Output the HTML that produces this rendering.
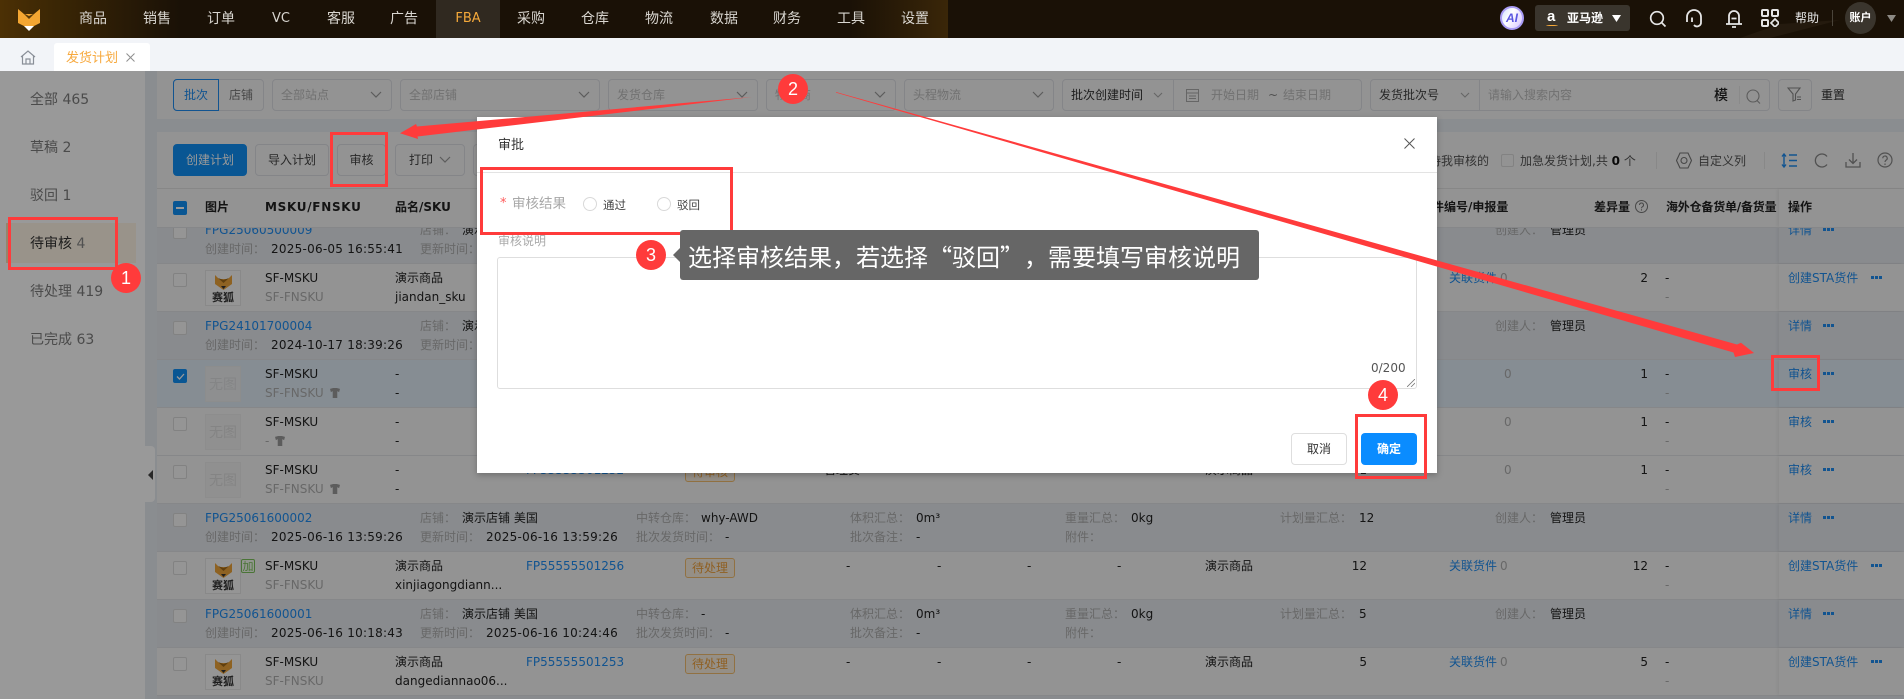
<!DOCTYPE html>
<html lang="zh"><head><meta charset="utf-8"><title>发货计划</title>
<style>
html,body{margin:0;padding:0;width:1904px;height:699px;overflow:hidden;background:#f2f4f8;font-family:"DejaVu Sans","Noto Sans CJK SC",sans-serif;font-size:12px;color:#222}
div,span,svg{box-sizing:border-box}
.abs,.t,svg.i{position:absolute}
.t{white-space:nowrap;line-height:18px}
.cn{font-family:"Noto Sans CJK SC",sans-serif}
.top{position:absolute;left:0;top:0;width:1904px;height:38px;background:#1a1106;overflow:hidden}
.n{position:absolute;top:8px;width:64px;text-align:center;color:#d9d6d0;font-size:14px;line-height:20px;font-family:"Noto Sans CJK SC",sans-serif}
.side{position:absolute;left:0;top:71px;width:145px;height:628px;background:#fff}
.si{position:absolute;left:30px;font-size:14px;line-height:20px;color:#7d7d7d;white-space:nowrap}
.s{position:absolute;top:79px;height:32px;border:1px solid #dcdee3;border-radius:4px}
.ph{color:#bdbdbd;position:absolute;top:87px;line-height:16px;white-space:nowrap}
.btn{position:absolute;top:144px;height:32px;border:1px solid #dcdee3;border-radius:4px;text-align:center;line-height:30px;color:#444}
.h{position:absolute;top:198px;line-height:18px;font-weight:700;color:#222;white-space:nowrap;font-size:12px}
.r{position:absolute;left:157px;width:1747px;height:48px;border-bottom:1px solid #dfe1e5}
.bt{background:#e4e8ed}.sk{background:#f6f6f6}.se{background:#dfebf5}
.in{position:absolute;left:-157px;top:-227px;width:1904px;height:699px}
.cb{position:absolute;left:16px;top:9px;width:14px;height:14px;border:1px solid #d9d9d9;border-radius:2px;background:#f8f8f8}
.op{position:absolute;left:1622px;top:0;width:125px;height:47px;background:inherit;box-shadow:-2px 0 3px rgba(0,0,0,.05)}
.x{position:absolute;white-space:nowrap;line-height:18px}
.a{top:5px}.c{top:24px}
.g{color:#adadad}.k{color:#1f8cf0}
.d{letter-spacing:.24px}
.img{position:absolute;left:48px;top:6px;width:36px;height:36px;border:1px solid #e4e4e4;background:#f8f8f8;text-align:center}
.nop{position:absolute;left:48px;top:6px;width:36px;height:36px;background:#f0f0f0;border:1px solid #ebebeb;text-align:center;line-height:34px;font-size:14px;color:#dcdcdc;font-family:"Noto Sans CJK SC",sans-serif}
.fox{position:absolute;left:9px;top:4px}
.hu{position:absolute;left:0;right:0;top:20px;font-size:11px;line-height:13px;font-weight:700;color:#333;font-family:"Noto Sans CJK SC",sans-serif}
.tag{position:absolute;left:528px;top:6px;width:50px;height:20px;border:1px solid #f2bd6e;border-radius:3px;background:#f8efdf;color:#efa03c;text-align:center;line-height:18px}
.dots{position:absolute;top:12px;width:11px;height:3px;background:repeating-linear-gradient(90deg,#1f8cf0 0,#1f8cf0 3px,transparent 3px,transparent 4px)}
.shade{position:absolute;left:0;top:71px;width:1904px;height:628px;background:rgba(0,0,0,.4)}
.modal{position:absolute;left:477px;top:117px;width:960px;height:356px;background:#fff;box-shadow:0 2px 6px rgba(0,0,0,.25)}
.mt{position:absolute;white-space:nowrap;line-height:18px}
.radio{position:absolute;width:14px;height:14px;border:1px solid #d9d9d9;border-radius:50%;background:#fff}
.rb{position:absolute;border:3px solid #ff3b3b}
.no{position:absolute;width:30px;height:30px;border-radius:50%;background:#ff3b3b;color:#fff;text-align:center;font-size:18px;line-height:30px;font-family:"Liberation Sans",sans-serif}
</style></head><body>

<!-- top bar -->
<div class="top">
<div class="abs" style="left:0;top:0;width:200px;height:38px;background:linear-gradient(90deg,#4c3005 0,#3c2705 25%,#1a1106 90%)"></div>
<div class="abs" style="left:850px;top:0;width:98px;height:38px;background:linear-gradient(90deg,rgba(60,38,8,0),#3a2608)"></div>
<svg class="i" style="left:1740px;top:20px" width="110" height="18"><path d="M0 18L40 4L100 0L30 18Z" fill="#241a0e"/></svg>
<svg class="i" style="left:17px;top:8px" width="24" height="24" viewBox="0 0 24 24"><path d="M1 1L7 6H17L23 1V15L15 19H9L1 15Z" fill="#f4a632"/><path d="M6 5L12 11L18 5L12 8Z" fill="#5a3b0a"/><path d="M7 18H17L12 23Z" fill="#fff"/></svg>
<div class="abs" style="left:436px;top:0;width:64px;height:38px;background:#302920"></div>
<div class="n" style="left:61px">商品</div><div class="n" style="left:125px">销售</div><div class="n" style="left:189px">订单</div><div class="n" style="left:249px;top:9px;font-family:'DejaVu Sans',sans-serif;font-size:13px">VC</div><div class="n" style="left:309px">客服</div><div class="n" style="left:372px">广告</div><div class="n" style="left:436px;top:9px;color:#f5a93a;font-family:'DejaVu Sans',sans-serif;font-size:13px">FBA</div><div class="n" style="left:499px">采购</div><div class="n" style="left:563px">仓库</div><div class="n" style="left:627px">物流</div><div class="n" style="left:692px">数据</div><div class="n" style="left:755px">财务</div><div class="n" style="left:819px">工具</div><div class="n" style="left:883px">设置</div>
<div class="abs" style="left:1500px;top:6px;width:24px;height:24px;border-radius:50%;background:linear-gradient(120deg,#cfe0ff,#fff 40%,#d7c6ff);border:2px solid #a99cf5;color:#5a56e0;font:italic 700 12px/20px 'Liberation Sans',sans-serif;text-align:center">AI</div>
<div class="abs" style="left:1535px;top:5px;width:95px;height:26px;background:#3a352d;border-radius:3px"></div>
<div class="t" style="left:1547px;top:8px;color:#fff;font:700 15px/18px 'Liberation Sans',sans-serif">a</div>
<div class="abs" style="left:1546px;top:24px;width:12px;height:2px;border-bottom:1.5px solid #f5a93a;border-radius:50%"></div>
<div class="t" style="left:1567px;top:9px;color:#fff;font-weight:700">亚马逊</div>
<svg class="i" style="left:1612px;top:15px" width="9" height="7"><path d="M0 0H9L4.500 7Z" fill="#fff"/></svg>
<svg class="i" style="left:1649px;top:10px" width="18" height="18" viewBox="0 0 18 18" fill="none" stroke="#e6e6e6" stroke-width="1.7"><circle cx="8" cy="8" r="6.300"/><path d="M12.500 12.500L16.500 16.500"/></svg>
<svg class="i" style="left:1685px;top:9px" width="18" height="20" viewBox="0 0 18 20" fill="none" stroke="#e6e6e6" stroke-width="1.800"><path d="M2 13V8a7 7 0 0 1 14 0v5M7 8.500V13M16 8v5a4 4 0 0 1-7 3"/></svg>
<svg class="i" style="left:1725px;top:9px" width="18" height="20" viewBox="0 0 18 20" fill="none" stroke="#e6e6e6" stroke-width="1.800"><path d="M1 15H17M4 15V7a5 5 0 0 1 10 0v8M6.500 9.500H11.500M7 18h4"/></svg>
<svg class="i" style="left:1761px;top:9px" width="18" height="18" viewBox="0 0 18 18" fill="none" stroke="#e6e6e6" stroke-width="2"><rect x="1" y="1" width="6" height="6" rx="1"/><rect x="11" y="1" width="6" height="6" rx="1"/><rect x="1" y="11" width="6" height="6" rx="1"/><path d="M14 10l4 4-4 4-4-4z" stroke-width="1.700"/></svg>
<div class="t" style="left:1795px;top:9px;color:#e6e6e6">帮助</div>
<div class="abs" style="left:1832px;top:10px;width:1px;height:16px;background:#4a443a"></div>
<div class="abs" style="left:1845px;top:2px;width:31px;height:32px;border-radius:50%;background:#3a352d;color:#fff;text-align:center;line-height:32px;font-weight:700;font-size:11px">账户</div>
<svg class="i" style="left:1887px;top:15px" width="9" height="7"><path d="M0 0H9L4.500 7Z" fill="#8d8a84"/></svg>
</div>

<!-- tabs -->
<svg class="i" style="left:20px;top:50px" width="16" height="15" viewBox="0 0 16 15" fill="none" stroke="#8a8f98" stroke-width="1.200"><path d="M1 7L8 1L15 7M2.500 6V14H13.500V6M6 14V9H10V14"/></svg>
<div class="abs" style="left:54px;top:43px;width:96px;height:28px;background:#fff;border-radius:3px 3px 0 0"></div>
<div class="t cn" style="left:66px;top:48px;color:#f7a93e;font-size:13px">发货计划</div>
<svg class="i" style="left:126px;top:53px" width="9" height="9" viewBox="0 0 9 9" stroke="#8f8f8f" stroke-width="1"><path d="M.5.500L8.500 8.500M8.500.500L.5 8.500"/></svg>

<!-- page bg -->
<div class="abs" style="left:145px;top:71px;width:1759px;height:628px;background:#e7ebf0"></div>

<!-- sidebar -->
<div class="side"></div>
<div class="abs" style="left:145px;top:446px;width:10px;height:56px;background:#fff;border-radius:0 4px 4px 0"></div>
<svg class="i" style="left:148px;top:470px" width="5" height="10"><path d="M5 0V10L0 5Z" fill="#444"/></svg>
<div class="abs" style="left:6px;top:223px;width:130px;height:40px;background:#fff6e6;border-left:2px solid #f6dfb5"></div>
<div class="si" style="top:90px">全部 465</div>
<div class="si" style="top:138px">草稿 2</div>
<div class="si" style="top:186px">驳回 1</div>
<div class="si" style="top:234px;color:#333">待审核 <span style="color:#888">4</span></div>
<div class="si" style="top:282px">待处理 419</div>
<div class="si" style="top:330px">已完成 63</div>

<!-- filter panel -->
<div class="abs" style="left:157px;top:71px;width:1747px;height:48px;background:#f5f5f5"></div>
<div class="s" style="left:173px;width:91px"></div>
<div class="abs" style="left:173px;top:79px;width:46px;height:32px;border:1px solid #1f8cf0;border-radius:4px 0 0 4px"></div>
<div class="t" style="left:184px;top:86px;color:#1f8cf0">批次</div><div class="t" style="left:229px;top:86px;color:#777">店铺</div>
<div class="s" style="left:272px;width:120px"></div><div class="ph" style="left:281px">全部站点</div>
<svg class="i" style="left:370px;top:91px" width="12" height="8" viewBox="0 0 12 8" fill="none" stroke="#999" stroke-width="1.200"><path d="M1 1l5 5 5-5"/></svg>
<div class="s" style="left:400px;width:200px"></div><div class="ph" style="left:409px">全部店铺</div>
<svg class="i" style="left:578px;top:91px" width="12" height="8" viewBox="0 0 12 8" fill="none" stroke="#999" stroke-width="1.200"><path d="M1 1l5 5 5-5"/></svg>
<div class="s" style="left:608px;width:150px"></div><div class="ph" style="left:617px">发货仓库</div>
<svg class="i" style="left:736px;top:91px" width="12" height="8" viewBox="0 0 12 8" fill="none" stroke="#999" stroke-width="1.200"><path d="M1 1l5 5 5-5"/></svg>
<div class="s" style="left:766px;width:130px"></div><div class="ph" style="left:775px">物流商</div>
<svg class="i" style="left:874px;top:91px" width="12" height="8" viewBox="0 0 12 8" fill="none" stroke="#999" stroke-width="1.200"><path d="M1 1l5 5 5-5"/></svg>
<div class="s" style="left:904px;width:150px"></div><div class="ph" style="left:913px">头程物流</div>
<svg class="i" style="left:1032px;top:91px" width="12" height="8" viewBox="0 0 12 8" fill="none" stroke="#999" stroke-width="1.200"><path d="M1 1l5 5 5-5"/></svg>
<div class="s" style="left:1062px;width:300px"></div>
<div class="abs" style="left:1173px;top:79px;width:1px;height:32px;background:#dcdee3"></div>
<div class="ph" style="left:1071px;color:#333">批次创建时间</div>
<svg class="i" style="left:1153px;top:92px" width="10" height="7" viewBox="0 0 10 7" fill="none" stroke="#aaa" stroke-width="1.100"><path d="M1 1l4 4 4-4"/></svg>
<svg class="i" style="left:1186px;top:88px" width="13" height="14" viewBox="0 0 13 14" fill="none" stroke="#aaa"><rect x=".5" y="1.500" width="12" height="12"/><path d="M.5 5H12.500M3 8H10M3 10.500H10"/></svg>
<div class="ph" style="left:1211px">开始日期</div><div class="ph" style="left:1268px;color:#888">~</div><div class="ph" style="left:1283px">结束日期</div>
<div class="s" style="left:1370px;width:400px"></div>
<div class="abs" style="left:1479px;top:79px;width:1px;height:32px;background:#dcdee3"></div>
<div class="ph" style="left:1379px;color:#444">发货批次号</div>
<svg class="i" style="left:1460px;top:92px" width="10" height="7" viewBox="0 0 10 7" fill="none" stroke="#aaa" stroke-width="1.100"><path d="M1 1l4 4 4-4"/></svg>
<div class="ph" style="left:1488px">请输入搜索内容</div>
<div class="t cn" style="left:1714px;top:86px;font-size:14px;font-weight:500;color:#222">模</div>
<div class="abs" style="left:1739px;top:86px;width:1px;height:18px;background:#e6e6e6"></div>
<svg class="i" style="left:1746px;top:89px" width="15" height="15" viewBox="0 0 15 15" fill="none" stroke="#999" stroke-width="1.100"><circle cx="7" cy="7" r="6"/><path d="M11 11.500L14 14.500"/></svg>
<div class="s" style="left:1778px;width:34px"></div>
<svg class="i" style="left:1787px;top:87px" width="15" height="15" viewBox="0 0 15 15" fill="none" stroke="#888" stroke-width="1.100"><path d="M1 1H13L8.500 7V13L6 14V7Z"/><path d="M10 10H14M10 12.500H14"/></svg>
<div class="t" style="left:1821px;top:86px;color:#333">重置</div>

<!-- toolbar -->
<div class="abs" style="left:157px;top:132px;width:1747px;height:56px;background:#f5f5f5"></div>
<div class="btn" style="left:173px;width:74px;background:#1090f5;border-color:#1090f5;color:#fff">创建计划</div>
<div class="btn" style="left:255px;width:74px">导入计划</div>
<div class="btn" style="left:337px;width:49px">审核</div>
<div class="btn" style="left:395px;width:70px;text-align:left;padding-left:13px">打印</div>
<svg class="i" style="left:439px;top:156px" width="12" height="8" viewBox="0 0 12 8" fill="none" stroke="#999" stroke-width="1.200"><path d="M1 1l5 5 5-5"/></svg>
<div class="btn" style="left:473px;width:60px"></div>
<div class="t" style="left:1429px;top:152px;color:#555">待我审核的</div>
<div class="abs" style="left:1501px;top:154px;width:13px;height:13px;border:1px solid #d9d9d9;border-radius:2px"></div>
<div class="t" style="left:1520px;top:152px;color:#555">加急发货计划,共 <b style="color:#111">0</b> 个</div>
<div class="abs" style="left:1656px;top:152px;width:1px;height:17px;background:#e3e3e3"></div>
<svg class="i" style="left:1676px;top:152px" width="16" height="17" viewBox="0 0 16 17" fill="none" stroke="#777" stroke-width="1.100"><path d="M4 1H12L15.500 8.500L12 16H4L.5 8.500Z"/><circle cx="8" cy="8.500" r="3"/></svg>
<div class="t" style="left:1698px;top:152px;color:#555">自定义列</div>
<div class="abs" style="left:1764px;top:152px;width:1px;height:17px;background:#e3e3e3"></div>
<svg class="i" style="left:1781px;top:153px" width="16" height="15" viewBox="0 0 16 15" fill="none" stroke="#1f8cf0" stroke-width="1.400"><path d="M3 1V14M1 3.500L3 1L5 3.500M1 11.500L3 14L5 11.500M8 2H16M8 7.500H16M8 13H16"/></svg>
<svg class="i" style="left:1814px;top:153px" width="15" height="15" viewBox="0 0 15 15" fill="none" stroke="#888" stroke-width="1.300"><path d="M13 3.500A6.500 6.500 0 1 0 13 11.500"/></svg>
<svg class="i" style="left:1845px;top:152px" width="16" height="16" viewBox="0 0 16 16" fill="none" stroke="#888" stroke-width="1.300"><path d="M8 1V11M4 7.500L8 11.500L12 7.500M1 10V15H15V10"/></svg>
<svg class="i" style="left:1877px;top:152px" width="16" height="16" viewBox="0 0 16 16" fill="none" stroke="#888" stroke-width="1.200"><circle cx="8" cy="8" r="7"/><path d="M5.800 6.200a2.200 2.200 0 1 1 3.300 1.900C8.300 8.600 8 9 8 10M8 11.500V13"/></svg>

<!-- header -->
<div class="abs" style="left:157px;top:188px;width:1747px;height:39px;background:#f5f5f5;border-top:1px solid #e2e2e2"></div>
<div class="abs" style="left:173px;top:201px;width:14px;height:14px;background:#1090f5;border-radius:2px"></div>
<div class="abs" style="left:176px;top:207px;width:8px;height:2px;background:#fff"></div>
<div class="h" style="left:205px">图片</div>
<div class="h" style="left:265px;letter-spacing:.7px">MSKU/FNSKU</div>
<div class="h" style="left:395px">品名/SKU</div>
<div class="h" style="left:1432px">件编号/申报量</div>
<div class="h" style="left:1594px">差异量</div>
<svg class="i" style="left:1635px;top:200px" width="13" height="13" viewBox="0 0 13 13" fill="none" stroke="#777"><circle cx="6.500" cy="6.500" r="6"/><path d="M4.500 5a2 2 0 1 1 3 1.700C6.800 7.100 6.500 7.500 6.500 8.200M6.500 9.300V10.500"/></svg>
<div class="h" style="left:1666px;letter-spacing:-.2px">海外仓备货单/备货量</div>
<div class="abs" style="left:1779px;top:189px;width:125px;height:38px;background:#f5f5f5;box-shadow:-2px 0 3px rgba(0,0,0,.05)"></div>
<div class="h" style="left:1788px">操作</div>

<!-- rows -->
<div class="abs" style="left:157px;top:227px;width:1747px;height:472px;overflow:hidden;background:#e4e8ed;border-top:1px solid #dfe1e5"><div class="in">
<div class="r bt" style="top:215px"><div class="op"></div><div class="cb"></div>
<span class="x a k" style="left:48px">FPG25060500009</span><span class="x c g" style="left:48px">创建时间：</span><span class="x c d" style="left:114px">2025-06-05 16:55:41</span><span class="x a g" style="left:263px">店铺：</span><span class="x a" style="left:305px">演示店铺 美国</span><span class="x c g" style="left:263px">更新时间：</span><span class="x a g" style="left:1338px">创建人：</span><span class="x a" style="left:1393px">管理员</span><span class="x a k" style="left:1631px">详情</span><span class="dots" style="left:1666px"></span></div>

<div class="r sk" style="top:263px"><div class="op"></div><div class="cb"></div><div class="img"><svg class="fox" width="17" height="15" viewBox="0 0 17 15"><path d="M0 0L4 4H13L17 0V9L8.500 15L0 9Z" fill="#eda33a"/><path d="M3 3L8.500 8L14 3L8.500 5Z" fill="#a06a18"/><path d="M6 11H11L8.500 14Z" fill="#333"/></svg><div class="hu">赛狐</div></div>
<span class="x a" style="left:108px">SF-MSKU</span><span class="x c g" style="left:108px">SF-FNSKU</span><span class="x a" style="left:238px">演示商品</span><span class="x c" style="left:238px">jiandan_sku</span>
<span class="x a k" style="left:1292px">关联货件</span><span class="x a g" style="left:1343px">0</span><span class="x a" style="left:1481px;width:10px;text-align:right">2</span><span class="x a" style="left:1508px">-</span><span class="x c g" style="left:1508px">-</span><span class="x a k" style="left:1631px">创建STA货件</span><span class="dots" style="left:1714px"></span></div>

<div class="r bt" style="top:311px"><div class="op"></div><div class="cb"></div>
<span class="x a k" style="left:48px">FPG24101700004</span><span class="x c g" style="left:48px">创建时间：</span><span class="x c d" style="left:114px">2024-10-17 18:39:26</span><span class="x a g" style="left:263px">店铺：</span><span class="x a" style="left:305px">演示店铺 美国</span><span class="x c g" style="left:263px">更新时间：</span><span class="x a g" style="left:1338px">创建人：</span><span class="x a" style="left:1393px">管理员</span><span class="x a k" style="left:1631px">详情</span><span class="dots" style="left:1666px"></span></div>

<div class="r se" style="top:359px"><div class="op"></div><div class="cb" style="background:#1090f5;border-color:#1090f5"><svg class="abs" style="left:2px;top:3px" width="9" height="7" viewBox="0 0 9 7" fill="none" stroke="#fff" stroke-width="1.300"><path d="M1 3.500L3.500 6L8 1"/></svg></div><div class="nop" style="opacity:.85">无图</div>
<span class="x a" style="left:108px">SF-MSKU</span><span class="x c g" style="left:108px">SF-FNSKU</span><svg class="abs" style="left:173px;top:28px" width="10" height="10" viewBox="0 0 11 11"><path d="M0 1L3.500 0H7.500L11 1L10 4.500L8 3.500V11H3V3.500L1 4.500Z" fill="#999"/></svg><span class="x a" style="left:238px">-</span><span class="x c" style="left:238px">-</span>
<span class="x a g" style="left:1347px">0</span><span class="x a" style="left:1481px;width:10px;text-align:right">1</span><span class="x a" style="left:1508px">-</span><span class="x c g" style="left:1508px">-</span><span class="x a k" style="left:1631px">审核</span><span class="dots" style="left:1666px"></span></div>

<div class="r sk" style="top:407px"><div class="op"></div><div class="cb"></div><div class="nop">无图</div>
<span class="x a" style="left:108px">SF-MSKU</span><span class="x c g" style="left:108px">-</span><svg class="abs" style="left:118px;top:28px" width="10" height="10" viewBox="0 0 11 11"><path d="M0 1L3.500 0H7.500L11 1L10 4.500L8 3.500V11H3V3.500L1 4.500Z" fill="#999"/></svg><span class="x a" style="left:238px">-</span><span class="x c" style="left:238px">-</span>
<span class="x a g" style="left:1347px">0</span><span class="x a" style="left:1481px;width:10px;text-align:right">1</span><span class="x a" style="left:1508px">-</span><span class="x c g" style="left:1508px">-</span><span class="x a k" style="left:1631px">审核</span><span class="dots" style="left:1666px"></span></div>

<div class="r sk" style="top:455px"><div class="op"></div><div class="cb"></div><div class="nop">无图</div>
<span class="x a" style="left:108px">SF-MSKU</span><span class="x c g" style="left:108px">SF-FNSKU</span><svg class="abs" style="left:173px;top:28px" width="10" height="10" viewBox="0 0 11 11"><path d="M0 1L3.500 0H7.500L11 1L10 4.500L8 3.500V11H3V3.500L1 4.500Z" fill="#999"/></svg><span class="x a" style="left:238px">-</span><span class="x c" style="left:238px">-</span><span class="x a k" style="left:369px">FP55555501252</span><div class="tag">待审核</div><span class="x a" style="left:667px">管理员</span><span class="x a" style="left:1048px">演示商品</span>
<span class="x a" style="left:1200px;width:10px;text-align:right">1</span><span class="x a g" style="left:1347px">0</span><span class="x a" style="left:1481px;width:10px;text-align:right">1</span><span class="x a" style="left:1508px">-</span><span class="x c g" style="left:1508px">-</span><span class="x a k" style="left:1631px">审核</span><span class="dots" style="left:1666px"></span></div>

<div class="r bt" style="top:503px"><div class="op"></div><div class="cb"></div>
<span class="x a k" style="left:48px">FPG25061600002</span><span class="x c g" style="left:48px">创建时间：</span><span class="x c d" style="left:114px">2025-06-16 13:59:26</span><span class="x a g" style="left:263px">店铺：</span><span class="x a" style="left:305px">演示店铺 美国</span><span class="x c g" style="left:263px">更新时间：</span><span class="x c d" style="left:329px">2025-06-16 13:59:26</span>
<span class="x a g" style="left:479px">中转仓库：</span><span class="x a" style="left:544px">why-AWD</span><span class="x c g" style="left:479px">批次发货时间：</span><span class="x c" style="left:568px">-</span>
<span class="x a g" style="left:693px">体积汇总：</span><span class="x a" style="left:759px">0m³</span><span class="x c g" style="left:693px">批次备注：</span><span class="x c" style="left:759px">-</span>
<span class="x a g" style="left:908px">重量汇总：</span><span class="x a" style="left:974px">0kg</span><span class="x c g" style="left:908px">附件：</span>
<span class="x a g" style="left:1123px">计划量汇总：</span><span class="x a" style="left:1202px">12</span><span class="x a g" style="left:1338px">创建人：</span><span class="x a" style="left:1393px">管理员</span><span class="x a k" style="left:1631px">详情</span><span class="dots" style="left:1666px"></span></div>

<div class="r sk" style="top:551px"><div class="op"></div><div class="cb"></div><div class="img"><svg class="fox" width="17" height="15" viewBox="0 0 17 15"><path d="M0 0L4 4H13L17 0V9L8.500 15L0 9Z" fill="#eda33a"/><path d="M3 3L8.500 8L14 3L8.500 5Z" fill="#a06a18"/><path d="M6 11H11L8.500 14Z" fill="#333"/></svg><div class="hu">赛狐</div></div>
<div class="abs cn" style="left:84px;top:7px;width:14px;height:14px;border:1px solid #7cc25a;border-radius:2px;color:#7cc25a;font-size:11px;line-height:12px;text-align:center;background:#f3faee">加</div>
<span class="x a" style="left:108px">SF-MSKU</span><span class="x c g" style="left:108px">SF-FNSKU</span><span class="x a" style="left:238px">演示商品</span><span class="x c" style="left:238px">xinjiagongdiann...</span><span class="x a k" style="left:369px">FP55555501256</span><div class="tag">待处理</div>
<span class="x a" style="left:689px">-</span><span class="x a" style="left:780px">-</span><span class="x a" style="left:870px">-</span><span class="x a" style="left:960px">-</span><span class="x a" style="left:1048px">演示商品</span><span class="x a" style="left:1190px;width:20px;text-align:right">12</span>
<span class="x a k" style="left:1292px">关联货件</span><span class="x a g" style="left:1343px">0</span><span class="x a" style="left:1471px;width:20px;text-align:right">12</span><span class="x a" style="left:1508px">-</span><span class="x c g" style="left:1508px">-</span><span class="x a k" style="left:1631px">创建STA货件</span><span class="dots" style="left:1714px"></span></div>

<div class="r bt" style="top:599px"><div class="op"></div><div class="cb"></div>
<span class="x a k" style="left:48px">FPG25061600001</span><span class="x c g" style="left:48px">创建时间：</span><span class="x c d" style="left:114px">2025-06-16 10:18:43</span><span class="x a g" style="left:263px">店铺：</span><span class="x a" style="left:305px">演示店铺 美国</span><span class="x c g" style="left:263px">更新时间：</span><span class="x c d" style="left:329px">2025-06-16 10:24:46</span>
<span class="x a g" style="left:479px">中转仓库：</span><span class="x a" style="left:544px">-</span><span class="x c g" style="left:479px">批次发货时间：</span><span class="x c" style="left:568px">-</span>
<span class="x a g" style="left:693px">体积汇总：</span><span class="x a" style="left:759px">0m³</span><span class="x c g" style="left:693px">批次备注：</span><span class="x c" style="left:759px">-</span>
<span class="x a g" style="left:908px">重量汇总：</span><span class="x a" style="left:974px">0kg</span><span class="x c g" style="left:908px">附件：</span>
<span class="x a g" style="left:1123px">计划量汇总：</span><span class="x a" style="left:1202px">5</span><span class="x a g" style="left:1338px">创建人：</span><span class="x a" style="left:1393px">管理员</span><span class="x a k" style="left:1631px">详情</span><span class="dots" style="left:1666px"></span></div>

<div class="r sk" style="top:647px"><div class="op"></div><div class="cb"></div><div class="img"><svg class="fox" width="17" height="15" viewBox="0 0 17 15"><path d="M0 0L4 4H13L17 0V9L8.500 15L0 9Z" fill="#eda33a"/><path d="M3 3L8.500 8L14 3L8.500 5Z" fill="#a06a18"/><path d="M6 11H11L8.500 14Z" fill="#333"/></svg><div class="hu">赛狐</div></div>
<span class="x a" style="left:108px">SF-MSKU</span><span class="x c g" style="left:108px">SF-FNSKU</span><span class="x a" style="left:238px">演示商品</span><span class="x c" style="left:238px">dangediannao06...</span><span class="x a k" style="left:369px">FP55555501253</span><div class="tag">待处理</div>
<span class="x a" style="left:689px">-</span><span class="x a" style="left:780px">-</span><span class="x a" style="left:870px">-</span><span class="x a" style="left:960px">-</span><span class="x a" style="left:1048px">演示商品</span><span class="x a" style="left:1190px;width:20px;text-align:right">5</span>
<span class="x a k" style="left:1292px">关联货件</span><span class="x a g" style="left:1343px">0</span><span class="x a" style="left:1471px;width:20px;text-align:right">5</span><span class="x a" style="left:1508px">-</span><span class="x c g" style="left:1508px">-</span><span class="x a k" style="left:1631px">创建STA货件</span><span class="dots" style="left:1714px"></span></div>
</div></div>

<!-- overlay -->
<div class="shade"></div>

<!-- modal -->
<div class="modal"></div>
<div class="mt" style="left:498px;top:137px;font-size:13px;color:#333">审批</div>
<svg class="i" style="left:1404px;top:138px" width="11" height="11" viewBox="0 0 11 11" stroke="#555" stroke-width="1"><path d="M.5.500L10.500 10.500M10.500.500L.5 10.500"/></svg>
<div class="abs" style="left:477px;top:172px;width:960px;height:1px;background:#e3e3e3"></div>
<div class="mt" style="left:500px;top:195px;color:#ff5a5a;font-size:13px">*</div>
<div class="mt" style="left:512px;top:195px;color:#a8a8a8;font-size:13.500px">审核结果</div>
<div class="radio" style="left:583px;top:197px"></div><div class="mt" style="left:603px;top:196px;font-size:11.500px;color:#444">通过</div>
<div class="radio" style="left:657px;top:197px"></div><div class="mt" style="left:677px;top:196px;font-size:11.500px;color:#444">驳回</div>
<div class="mt" style="left:498px;top:232px;color:#aaa">审核说明</div>
<div class="abs" style="left:497px;top:257px;width:920px;height:132px;border:1px solid #dedede;border-radius:3px"></div>
<div class="mt" style="left:1371px;top:359px;color:#555;font-size:12px">0/200</div>
<svg class="i" style="left:1407px;top:379px" width="8" height="8" stroke="#777" stroke-width=".8"><path d="M0 8L8 0M4 8L8 4"/></svg>
<div class="abs" style="left:1291px;top:433px;width:56px;height:32px;border:1px solid #dedede;border-radius:4px;text-align:center;line-height:30px;color:#333">取消</div>
<div class="abs" style="left:1361px;top:433px;width:56px;height:32px;border-radius:4px;background:#0a8cff;text-align:center;line-height:32px;color:#fff;font-weight:700">确定</div>

<!-- annotations -->
<div class="rb" style="left:8px;top:217px;width:110px;height:53px"></div>
<div class="rb" style="left:330px;top:132px;width:58px;height:55px"></div>
<div class="rb" style="left:480px;top:167px;width:253px;height:68px"></div>
<div class="rb" style="left:1355px;top:414px;width:72px;height:65px"></div>
<div class="rb" style="left:1771px;top:355px;width:49px;height:36px"></div>
<svg class="i" style="left:0;top:0" width="1904" height="699"><polygon points="752,97 417,126.500 416,124 400,133.300 418,139 417.500,136.500" fill="#ff3b3b"/><polygon points="836,92 1737,344.500 1741,342.700 1754,353 1735,357 1733.500,352.500 836,92.600" fill="#ff3b3b"/></svg>
<div class="no" style="left:111px;top:263px">1</div>
<div class="no" style="left:778px;top:74px">2</div>
<div class="no" style="left:636px;top:240px">3</div>
<div class="no" style="left:1368px;top:380px">4</div>
<div class="abs" style="left:680px;top:230px;width:579px;height:50px;background:#666;border-radius:3px"></div>
<svg class="i" style="left:673px;top:247px" width="8" height="16"><path d="M8 0V16L0 8Z" fill="#666"/></svg>
<div class="t cn" style="left:688px;top:239px;font-size:24px;line-height:34px;color:#fff;text-spacing-trim:space-all">选择审核结果，若选择“驳回”，需要填写审核说明</div>

</body></html>
